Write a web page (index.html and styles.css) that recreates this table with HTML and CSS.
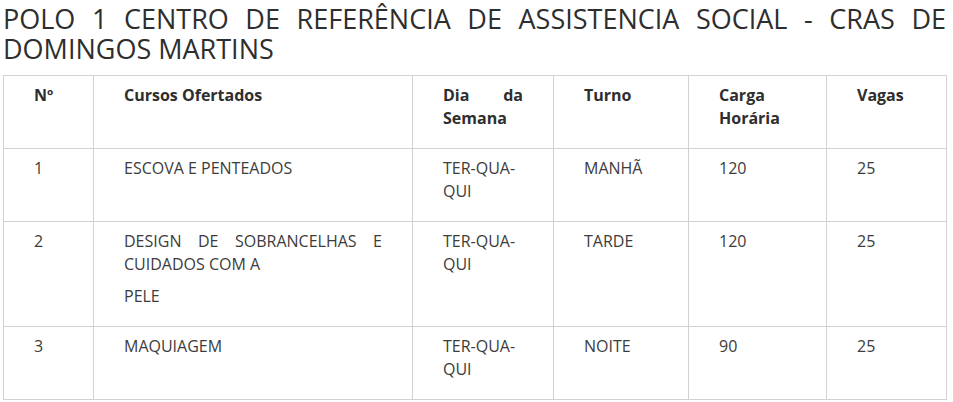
FILE: index.html
```html
<!DOCTYPE html>
<html lang="pt">
<head>
<meta charset="utf-8">
<title>Polo 1 - CRAS de Domingos Martins</title>
<link rel="stylesheet" href="styles.css">
</head>
<body>
<div class="page">
  <h2 class="title">POLO 1 CENTRO DE REFERÊNCIA DE ASSISTENCIA SOCIAL - CRAS DE DOMINGOS MARTINS</h2>
  <table class="courses">
    <colgroup>
      <col class="c1"><col class="c2"><col class="c3"><col class="c4"><col class="c5"><col class="c6">
    </colgroup>
    <thead>
      <tr>
        <th><p>Nº</p></th>
        <th><p>Cursos Ofertados</p></th>
        <th><p>Dia da Semana</p></th>
        <th><p>Turno</p></th>
        <th><p>Carga Horária</p></th>
        <th><p>Vagas</p></th>
      </tr>
    </thead>
    <tbody>
      <tr>
        <td><p>1</p></td>
        <td><p>ESCOVA E PENTEADOS</p></td>
        <td><p>TER-QUA-QUI</p></td>
        <td><p>MANHÃ</p></td>
        <td><p>120</p></td>
        <td><p>25</p></td>
      </tr>
      <tr>
        <td><p>2</p></td>
        <td><p>DESIGN DE SOBRANCELHAS E CUIDADOS COM A</p><p>PELE</p></td>
        <td><p>TER-QUA-QUI</p></td>
        <td><p>TARDE</p></td>
        <td><p>120</p></td>
        <td><p>25</p></td>
      </tr>
      <tr>
        <td><p>3</p></td>
        <td><p>MAQUIAGEM</p></td>
        <td><p>TER-QUA-QUI</p></td>
        <td><p>NOITE</p></td>
        <td><p>90</p></td>
        <td><p>25</p></td>
      </tr>
    </tbody>
  </table>
</div>
</body>
</html>
```
FILE: styles.css
```css
html, body {
  margin: 0;
  padding: 0;
  background: #ffffff;
}

body {
  font-family: "Open Sans", "Liberation Sans", sans-serif;
  color: #3c3c3c;
}

.page {
  width: 943px;
  margin: 4px 0 0 3px;
}

.title {
  margin: 0 0 12px 0;
  font-size: 27px;
  font-weight: 400;
  line-height: 29.5px;
  color: #2e2e2e;
  text-align: justify;
}

.courses {
  width: 943px;
  border-collapse: collapse;
  table-layout: fixed;
}

.c1 { width: 90px; }
.c2 { width: 319px; }
.c3 { width: 141px; }
.c4 { width: 135px; }
.c5 { width: 138px; }
.c6 { width: 120px; }

.courses th,
.courses td {
  border: 1px solid #d2d2d2;
  padding: 8px 30px 18px 30px;
  vertical-align: top;
  text-align: justify;
  font-size: 16px;
  line-height: 23px;
}

.courses th {
  font-weight: 700;
  color: #2e2e2e;
}

.courses td {
  font-weight: 400;
  color: #3c3c3c;
}

.courses p {
  margin: 0;
}

.courses p + p {
  margin-top: 9px;
}
```
